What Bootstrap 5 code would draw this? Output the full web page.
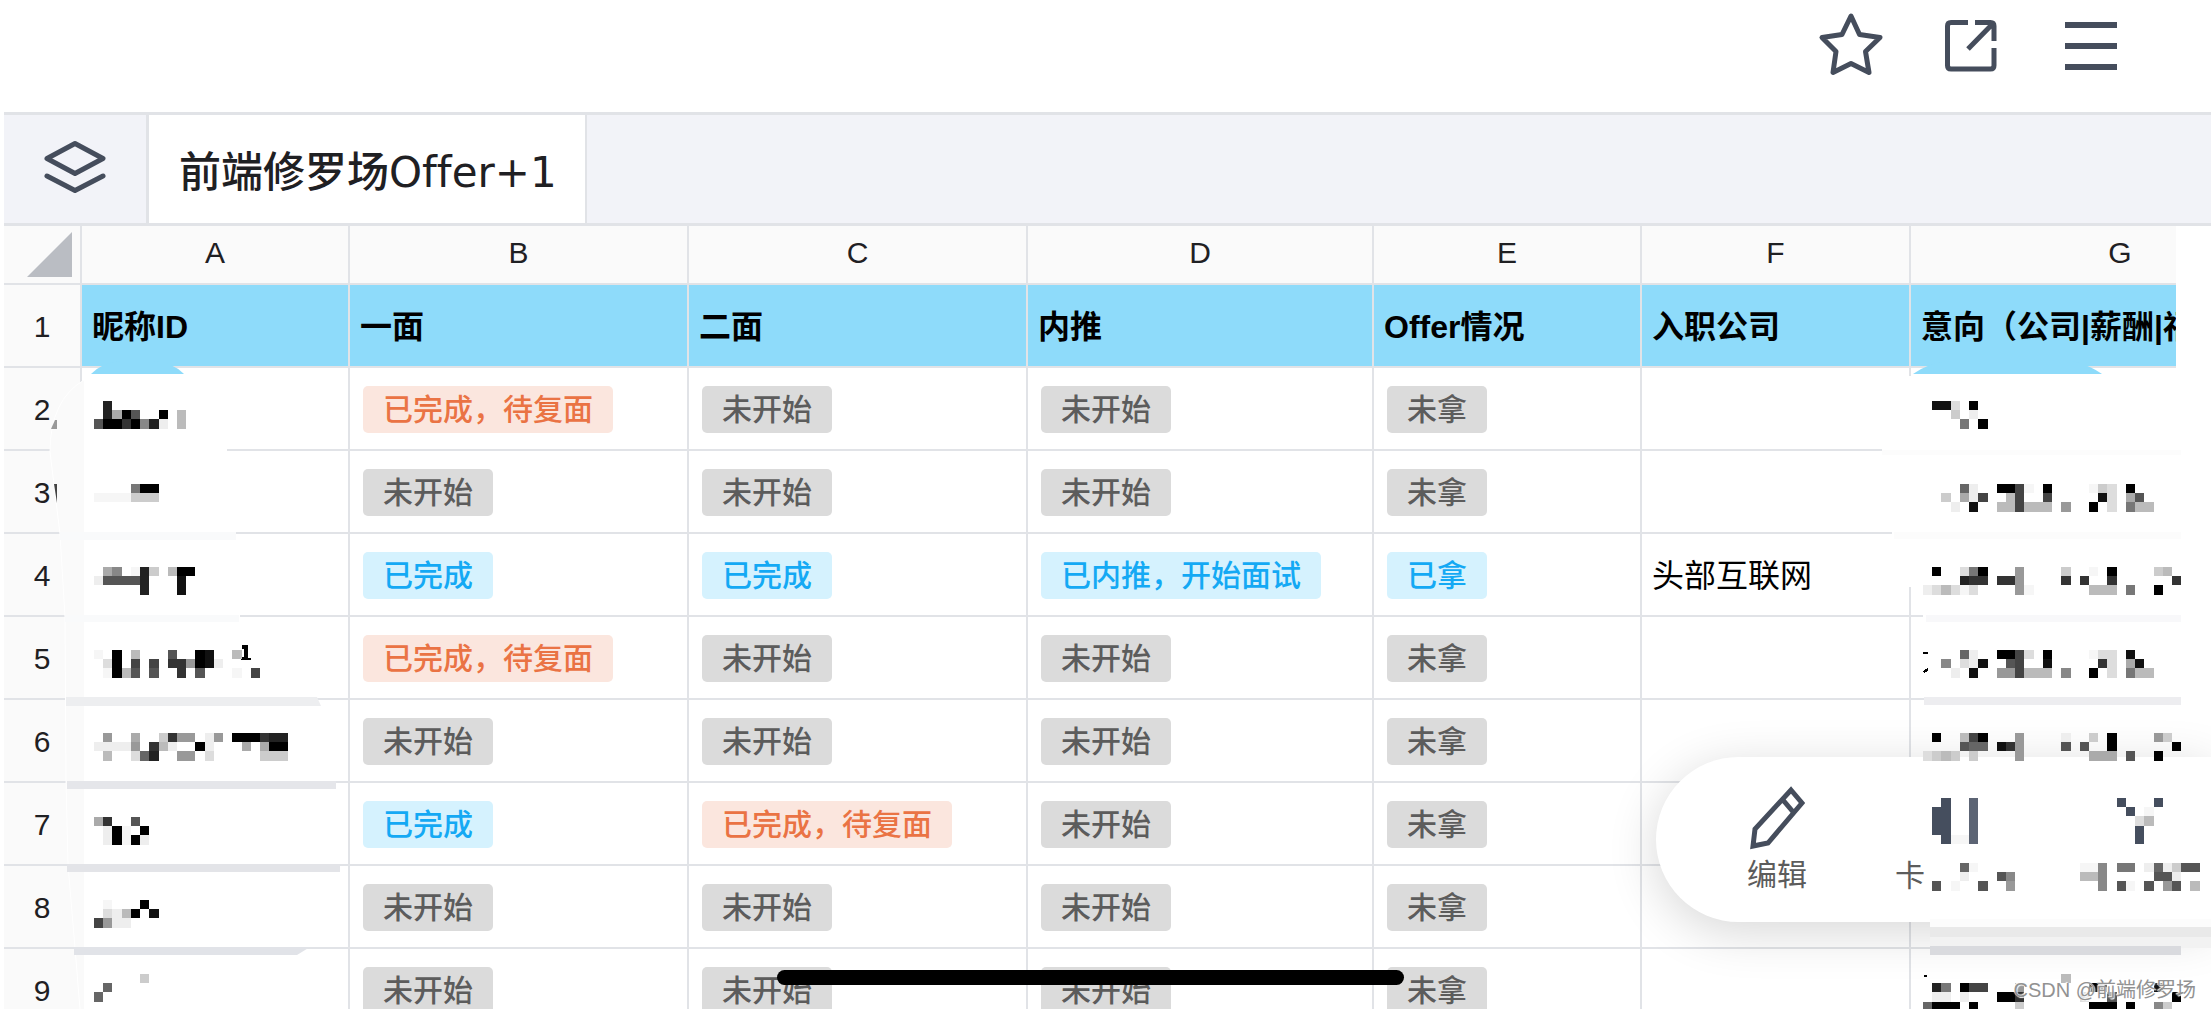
<!DOCTYPE html>
<html lang="zh-CN">
<head>
<meta charset="utf-8">
<meta name="viewport" content="width=device-width, initial-scale=1">
<title>前端修罗场Offer+1</title>
<link href="https://cdn.jsdelivr.net/npm/bootstrap@5.3.0/dist/css/bootstrap.min.css" rel="stylesheet">
<style>
  :root { --line: #e1e3e7; --ink: #454d5c; }
  body { font-family: "Liberation Sans", "Noto Sans CJK SC", sans-serif; color: #000; background: #fff; }
  .topbar { height: 112px; padding: 0 94px 20px 0; gap: 68px; }
  .icon-btn { color: var(--ink); line-height: 0; }
  .icon-btn svg { overflow: visible; }
  .tabbar { height: 114px; margin-left: 4px; border-top: 3px solid var(--line); border-bottom: 3px solid var(--line); background: #f2f3f8; }
  .layers-btn { width: 145px; border-right: 3px solid var(--line); border-radius: 0; color: var(--ink); padding: 0 0 4px; line-height: 0; }
  .sheet-tab { padding: 8px 28px 0 30px; border-right: 2px solid var(--line); background: #fff; color: #1f2023; font: 500 42px/48px "DejaVu Sans", "Noto Sans CJK SC", sans-serif; font-variant-ligatures: none; text-decoration: none; }
  .sheet { margin: 0 35px 0 4px; min-height: 0; }
  .grid { table-layout: fixed; width: 2327px; border-collapse: separate; border-spacing: 0; }
  .grid th, .grid td { height: 83px; padding: 2px 10px 0; border-right: 2px solid var(--line); border-bottom: 2px solid var(--line); vertical-align: middle; white-space: nowrap; font-size: 32px; line-height: 40px; }
  .grid thead th { height: 59px; padding: 0 0 4px; background: #fafafa; color: #1f2023; font-size: 30px; font-weight: 400; text-align: center; }
  .grid tbody th { padding: 2px 0 0; background: #fafafa; color: #1f2023; font-size: 30px; font-weight: 400; text-align: center; }
  .grid .heading td { background: #8edbfa; font-weight: 700; }
  .grid td.tagged { padding: 2px 13px 0; }
  .tag { display: block; width: fit-content; padding: 1px 20px 0; border-radius: 5px; font-size: 30px; font-weight: 500; line-height: 46px; }
  .tag-idle { background: #dbdbdb; color: #5c5c5c; }
  .tag-done { background: #d5f2fe; color: #14a9f4; }
  .tag-wait { background: #fbe6de; color: #ea7344; }
  .corner { float: right; margin: 4px 8px 0 0; display: block; }
  .marks { top: 0; left: 0; width: 100%; height: 100%; pointer-events: none; }
  .actions { right: 0; bottom: 87px; left: 1656px; height: 165px; padding-left: 61px; gap: 34px; background: #fff; border-radius: 83px 0 0 83px; box-shadow: 0 10px 50px rgba(0,0,0,.16); }
  .action { width: 120px; padding: 0; color: #5c5c5c; font-size: 30px; line-height: 40px; }
  .action svg { color: var(--ink); }
  .home-bar { left: 777px; bottom: 24px; width: 627px; height: 15px; background: #000; }
  .credit { right: 15px; bottom: 5px; font-size: 20px; line-height: 28px; color: #929292; text-shadow: -1px -1px 1px #fff, 1px 1px 1px #fff; }
</style>
<script src="https://cdn.jsdelivr.net/npm/bootstrap@5.3.0/dist/js/bootstrap.bundle.min.js"></script>
</head>
<body>
<div class="position-relative vh-100 overflow-hidden d-flex flex-column">
  <header class="topbar d-flex justify-content-end align-items-center flex-shrink-0">
    <button class="icon-btn btn p-0 border-0" type="button" aria-label="收藏">
      <svg width="52" height="52" viewBox="6 8 52 52" fill="none" stroke="currentColor" stroke-width="5" stroke-linejoin="round"><path d="M32 4 40.500 22.500 61 25.500 46.500 39.500 50 60.500 32 51.500 14 60.500 17 39.500 3 25.500 23 22.500Z"/></svg>
    </button>
    <button class="icon-btn btn p-0 border-0" type="button" aria-label="分享">
      <svg width="52" height="52" viewBox="0 0 52 52" fill="none" stroke="currentColor" stroke-width="5"><path d="M23 2.500H6Q2.500 2.500 2.500 6V45.500Q2.500 49 6 49H45.500Q49 49 49 45.500V28M30 2.500H45.500Q49 2.500 49 6V21M47.500 4 23 29"/></svg>
    </button>
    <button class="icon-btn btn p-0 border-0" type="button" aria-label="菜单">
      <svg width="52" height="52" viewBox="0 0 52 52" fill="none" stroke="currentColor" stroke-width="6"><path d="M0 5H52M0 26H52M0 47H52"/></svg>
    </button>
  </header>

  <nav class="tabbar d-flex flex-shrink-0">
    <button class="layers-btn btn border-top-0 border-bottom-0 border-start-0" type="button" aria-label="工作表">
      <svg width="64" height="54" viewBox="0 0 64 54" fill="none" stroke="currentColor" stroke-width="5" stroke-linejoin="round" stroke-linecap="round"><path d="M32 3.500 60 18.500 32 33.500 4 18.500ZM4 36 32 50.500 60 36"/></svg>
    </button>
    <a class="sheet-tab d-flex align-items-center" href="#sheet">前端修罗场Offer+1</a>
  </nav>

  <main class="sheet flex-fill overflow-hidden" id="sheet">
    <table class="grid">
      <colgroup><col style="width:78px"><col style="width:268px"><col style="width:339px"><col style="width:339px"><col style="width:346px"><col style="width:268px"><col style="width:269px"><col style="width:420px"></colgroup>
      <thead>
        <tr><th><svg class="corner" width="45" height="45" viewBox="0 0 45 45"><path d="M45 0V45H0Z" fill="#babdc3"/></svg></th><th>A</th><th>B</th><th>C</th><th>D</th><th>E</th><th>F</th><th>G</th></tr>
      </thead>
      <tbody>
        <tr class="heading"><th>1</th><td>昵称ID</td><td>一面</td><td>二面</td><td>内推</td><td>Offer情况</td><td>入职公司</td><td>意向（公司|薪酬|福利）</td></tr>
        <tr><th>2</th><td></td><td class="tagged"><span class="tag tag-wait">已完成，待复面</span></td><td class="tagged"><span class="tag tag-idle">未开始</span></td><td class="tagged"><span class="tag tag-idle">未开始</span></td><td class="tagged"><span class="tag tag-idle">未拿</span></td><td></td><td></td></tr>
        <tr><th>3</th><td></td><td class="tagged"><span class="tag tag-idle">未开始</span></td><td class="tagged"><span class="tag tag-idle">未开始</span></td><td class="tagged"><span class="tag tag-idle">未开始</span></td><td class="tagged"><span class="tag tag-idle">未拿</span></td><td></td><td></td></tr>
        <tr><th>4</th><td></td><td class="tagged"><span class="tag tag-done">已完成</span></td><td class="tagged"><span class="tag tag-done">已完成</span></td><td class="tagged"><span class="tag tag-done">已内推，开始面试</span></td><td class="tagged"><span class="tag tag-done">已拿</span></td><td>头部互联网</td><td></td></tr>
        <tr><th>5</th><td></td><td class="tagged"><span class="tag tag-wait">已完成，待复面</span></td><td class="tagged"><span class="tag tag-idle">未开始</span></td><td class="tagged"><span class="tag tag-idle">未开始</span></td><td class="tagged"><span class="tag tag-idle">未拿</span></td><td></td><td></td></tr>
        <tr><th>6</th><td></td><td class="tagged"><span class="tag tag-idle">未开始</span></td><td class="tagged"><span class="tag tag-idle">未开始</span></td><td class="tagged"><span class="tag tag-idle">未开始</span></td><td class="tagged"><span class="tag tag-idle">未拿</span></td><td></td><td></td></tr>
        <tr><th>7</th><td></td><td class="tagged"><span class="tag tag-done">已完成</span></td><td class="tagged"><span class="tag tag-wait">已完成，待复面</span></td><td class="tagged"><span class="tag tag-idle">未开始</span></td><td class="tagged"><span class="tag tag-idle">未拿</span></td><td></td><td></td></tr>
        <tr><th>8</th><td></td><td class="tagged"><span class="tag tag-idle">未开始</span></td><td class="tagged"><span class="tag tag-idle">未开始</span></td><td class="tagged"><span class="tag tag-idle">未开始</span></td><td class="tagged"><span class="tag tag-idle">未拿</span></td><td></td><td></td></tr>
        <tr><th>9</th><td></td><td class="tagged"><span class="tag tag-idle">未开始</span></td><td class="tagged"><span class="tag tag-idle">未开始</span></td><td class="tagged"><span class="tag tag-idle">未开始</span></td><td class="tagged"><span class="tag tag-idle">未拿</span></td><td></td><td></td></tr>
      </tbody>
    </table>
  </main>

  <!-- smudged areas of the private columns A and G -->
  <svg class="marks position-absolute" aria-hidden="true">
    <path d="M84 380 Q50 400 50 452 L60 534 65 617 66 780 68 865 75 948 80 1009H84Z" fill="#fafafa"/>
    <path d="M84 380 Q50 400 50 452 L60 534 65 617 66 780 68 865 75 948 80 1009" fill="none" stroke="#fff"/>
    <path d="M84 376H91V449H227V452H84ZM84 530H236V535H84ZM84 613H240V618H84Z" fill="#fff"/>
    <path d="M60 532H236V540H60ZM65 615H239V622H65Z" fill="#f9fafb"/>
    <path d="M66 697H317L321 706H66Z" fill="#edeef0"/>
    <path d="M67 781H336V789H67Z" fill="#e5e6ea"/>
    <path d="M67 864H340V872H67Z" fill="#e3e4e8"/>
    <path d="M74 947H310L297 955H74Z" fill="#e1e3e8"/>
    <path d="M91 374Q103 362 121 361H154Q174 363 184 374Z" fill="#8edbfa"/>
    <path d="M1882 448H2181V452H1882ZM1892 531H2181V535H1892ZM1923 614H2181V618H1923ZM1908 376H1912V587H1908ZM1924 696H2181V700H1924Z" fill="#fff"/>
    <path d="M1882 450H2181V455H1882ZM1894 532H2181V539H1894Z" fill="#fcfcfc"/>
    <path d="M1926 615H2181V622H1926Z" fill="#f8f8fa"/>
    <path d="M1924 697H2181V705H1924Z" fill="#ededf0"/>
    <path d="M1913 374Q1930 362 1951 361H2073Q2091 366 2102 374Z" fill="#8edbfa"/>
    <path d="M51 429 55 420H57V429Z" fill="#999"/>
    <path d="M54 484H57V503Z" fill="#444"/>
  </svg>

  <div class="actions position-absolute d-flex align-items-center">
    <button class="action btn border-0 d-flex flex-column align-items-center" type="button">
      <svg width="56" height="66" viewBox="0 0 56 66" fill="none" stroke="currentColor" stroke-width="5"><path d="M42 5 53 18 19 58 4 61 6 44ZM34 15 45 28"/></svg>
      <span class="mt-1">编辑</span>
    </button>
    <button class="action btn border-0 text-start" type="button"><span class="d-block mt-5 pt-4 ps-4">卡</span></button>
  </div>

  <svg class="marks position-absolute" id="mosaic" shape-rendering="crispEdges" aria-hidden="true">
    <path d="M1930 921H2211V948H1930Z" fill="#f2f2f2"/>
    <path d="M1930 927H2211V937H1930Z" fill="#e9e9e9"/>
    <path d="M1930 919H2211V927H1930Z" fill="#fcfcfc"/>
    <path d="M1930 946H2181V955H1930Z" fill="#d9dade"/>
    <path d="M242 645H248V658H251V660H241V657H244V649H242Z" fill="#000"/>
    <path d="M1923 652H1928V654H1923ZM1923 671 1928 668V671L1924 673ZM1924 975H1927V977H1924Z" fill="#000"/>
  </svg>

  <div class="home-bar position-absolute rounded-pill"></div>
  <div class="credit position-absolute">CSDN @前端修罗场</div>
</div>

<script>
  // Each string is one line of tiles: a hex digit is a grey level, N and M are the icon blues, a dot is empty.
  const tiles = [
    [94, 401, [".2", ".2a05..0.b", "5003082e.b"]],
    [94, 484, ["....700", "ffffccc"]],
    [94, 567, [".a8.f2c.b00", "e55552...1", ".....2...1"]],
    [94, 650, ["f.0.b...5..01..b", ".d0.4.4.33901e", ".f0b5.5..3.5...f.4"]],
    [94, 733, [".9..a..c399.e9.000322", "eeee9.3be..0e...a.a00", ".b..d62..99.d.....ccc"]],
    [94, 817, ["a3..5", ".e0f.0", ".e0f0e"]],
    [94, 900, [".f...0", ".deb0.1", "49ee"]],
    [94, 974, [".....c", ".6", "6"]],
    [1923, 401, [".11d.0", "...c.e", "....7.0"]],
    [1923, 484, ["....6e..004f.0....fcd.0", "..c.ae4..b4..4.....1d.a5", "...e.1..bb4bbb.9..0.d.7bb"]],
    [1923, 567, [".0..d70...9....c..f.0....cb", "....233.339....3.3..3......3", "edbdfd....9f......bbb.7..0"]],
    [1923, 650, ["....6e..004d.0....fdd.1", "..8.de1..54..1.....3d.a1", "...e.1..994bbb.8..0.d.7bb"]],
    [1923, 733, [".0..b40...9....e..c.0....9c", "....566.139....5.5..0......0", "dcbc.c....9.......aaa.5..0"]],
    [1923, 798, ["..N..M...............N...N", ".NN..M................N.f", ".NN..M.................db", ".NN..M.................N", "..NffM.................N"]],
    [1923, 863, ["....6f...........ff8.77.e6ec55", "....e...58.......bb8.....55e", ".5.f..5..9.........8.5f.5.95.b"]],
    [1923, 974, ["...............b", ".27.044...9.......05.....1", ".ee.e...003......d..5......0", "6000.0....c.......000.0..8c"]]
  ];
  const board = document.getElementById("mosaic");
  const step = 9.22;
  tiles.forEach(([left, top, lines]) => lines.forEach((line, r) => [...line].forEach((ch, c) => {
    if (ch === ".") return;
    const x = Math.round(left + c * step), y = Math.round(top + r * step);
    const grey = ch === "f" ? "#f6f6f6" : "#" + ch.repeat(3);
    const rect = document.createElementNS("http://www.w3.org/2000/svg", "rect");
    rect.setAttribute("x", x);
    rect.setAttribute("y", y);
    rect.setAttribute("width", Math.round(left + (c + 1) * step) - x);
    rect.setAttribute("height", Math.round(top + (r + 1) * step) - y);
    rect.setAttribute("fill", ch === "N" ? "#454e5e" : ch === "M" ? "#5c6474" : grey);
    board.append(rect);
  })));
</script>
</body>
</html>
